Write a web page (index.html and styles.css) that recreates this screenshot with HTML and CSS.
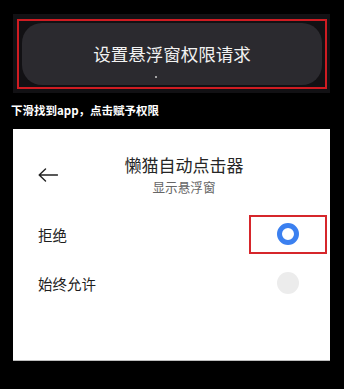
FILE: index.html
```html
<!DOCTYPE html>
<html lang="zh-CN">
<head>
<meta charset="utf-8">
<link rel="stylesheet" href="styles.css">
</head>
<body>
<div class="top">
  <div class="frame">
    <div class="button">
      <span class="button-text">设置悬浮窗权限请求</span>
      <span class="dot"></span>
    </div>
  </div>
</div>
<p class="hint">下滑找到app，点击赋予权限</p>
<div class="sheet">
  <div class="header">
    <svg class="back" width="20" height="14" viewBox="0 0 20 14">
      <path d="M19.5 7H1.5M7.5 1L1.2 7l6.3 6" fill="none" stroke="#222" stroke-width="1.4" stroke-linecap="round" stroke-linejoin="round"/>
    </svg>
    <div class="titles">
      <div class="title">懒猫自动点击器</div>
      <div class="subtitle">显示悬浮窗</div>
    </div>
    <div></div>
  </div>
  <div class="row">
    <span class="label">拒绝</span>
    <span class="mark marked"><span class="radio on"></span></span>
  </div>
  <div class="row">
    <span class="label">始终允许</span>
    <span class="mark"><span class="radio off"></span></span>
  </div>
</div>
</body>
</html>
```
FILE: styles.css
```css
html, body {
  margin: 0;
  padding: 0;
  background: #000;
  width: 344px;
  height: 389px;
  overflow: hidden;
  font-family: "Noto Sans CJK SC", "Noto Sans", sans-serif;
}

.top {
  margin: 14px 14px 0 13px;
  background: #121114;
  padding: 5px 3px 4px 4px;
}

.frame {
  border: 2px solid #cf1c22;
  padding: 2px 3px;
}

.button {
  position: relative;
  height: 62px;
  border-radius: 20px;
  background: #2b2a2f;
  display: flex;
  align-items: center;
  justify-content: center;
}

.button-text {
  color: #f2f2f2;
  font-size: 17.5px;
  line-height: 24px;
}

.dot {
  position: absolute;
  left: 133px;
  top: 53px;
  width: 1.5px;
  height: 1.5px;
  background: #bbb;
  border-radius: 50%;
}

.hint {
  margin: 10px 0 0 11px;
  height: 26px;
  color: #fff;
  font-weight: 700;
  font-size: 11.5px;
  line-height: 14px;
}

.sheet {
  margin: 0 14px 0 13px;
  background: #fff;
  border-bottom: 1px solid #bdbdbd;
  padding: 25px 3px 52px 25px;
}

.header {
  display: grid;
  grid-template-columns: 1fr auto 1fr;
  align-items: center;
  margin-right: -3px;
}

.back {
  display: block;
}

.titles {
  text-align: center;
}

.title {
  font-size: 17px;
  line-height: 22px;
  color: #262626;
}

.subtitle {
  margin-top: 2px;
  font-size: 12.6px;
  line-height: 18px;
  color: #666;
}

.header + .row {
  margin-top: 13.5px;
}

.row {
  display: flex;
  align-items: center;
  justify-content: space-between;
  height: 49px;
}

.label {
  font-size: 14.5px;
  color: #1e1e1e;
}

.mark {
  width: 78px;
  height: 39px;
  box-sizing: border-box;
  display: flex;
  align-items: center;
  justify-content: center;
  border: 2px solid transparent;
}

.mark.marked {
  border-color: #d6262b;
}

.radio {
  width: 22px;
  height: 22px;
  border-radius: 50%;
  box-sizing: border-box;
}

.radio.on {
  border: 5px solid #3b80f0;
  background: #fff;
}

.radio.off {
  background: #ececec;
}
```
